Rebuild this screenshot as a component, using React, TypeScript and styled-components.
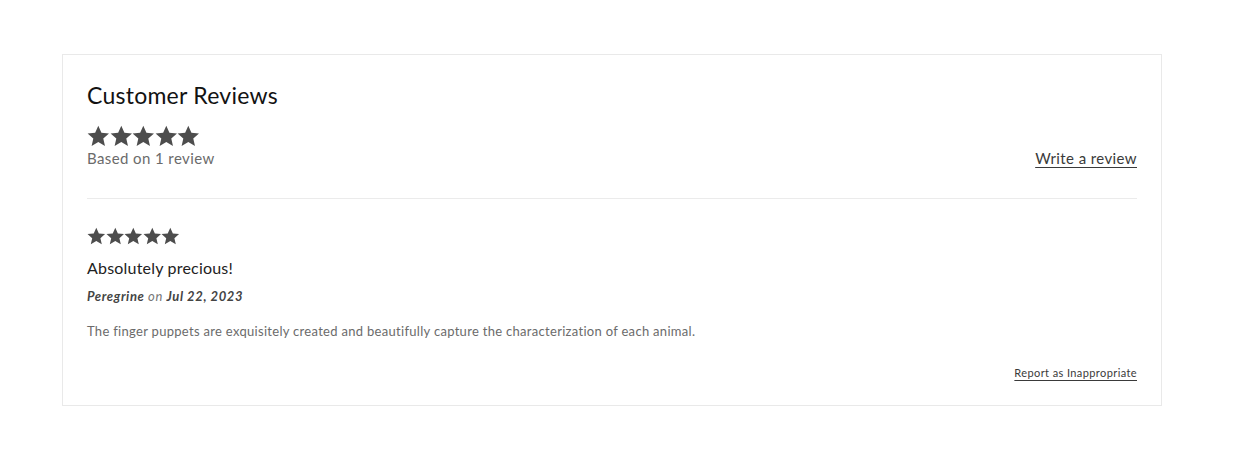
import React from 'react'
import styled, { createGlobalStyle } from 'styled-components'

const GlobalStyle = createGlobalStyle`
	body {
		margin: 0;
		background: #ffffff;
		font-family: 'Lato', 'Noto Sans', sans-serif;
		color: #121212;
	}
`

const Page = styled.div`
	padding: 54px 74px 52px 62px;
`

const Card = styled.section`
	border: 1px solid #e9e9e9;
	padding: 24px 24px 22px 24px;
`

const Title = styled.h2`
	margin: 0;
	font-size: 23px;
	font-weight: 400;
	line-height: 32px;
	color: #121212;
	letter-spacing: 0.25px;
`

const Summary = styled.div`
	display: flex;
	justify-content: space-between;
	align-items: flex-end;
	margin-top: 14px;
	padding-bottom: 30px;
	border-bottom: 1px solid #ebebeb;
`

const SummaryLeft = styled.div`
	display: flex;
	flex-direction: column;
`

const Stars = styled.div<{ $size: number }>`
	display: flex;
	color: #4d4d4d;
	height: ${({ $size }) => $size}px;
	svg {
		width: ${({ $size }) => $size}px;
		height: ${({ $size }) => $size}px;
		display: block;
	}
`

const Muted = styled.span`
	font-size: 15px;
	line-height: 20px;
	color: #6b6b6b;
	letter-spacing: 0.4px;
`

const Link = styled.a<{ $small?: boolean }>`
	color: #3a3a3a;
	text-decoration: underline;
	text-underline-offset: 3px;
	font-size: ${({ $small }) => ($small ? '11px' : '15px')};
	letter-spacing: ${({ $small }) => ($small ? '0.4px' : '0.4px')};
	line-height: 20px;
	cursor: pointer;
`

const Review = styled.article`
	padding-top: 28px;
	display: flex;
	flex-direction: column;
`

const ReviewTitle = styled.h3`
	margin: 12px 0 0;
	font-size: 16px;
	font-weight: 400;
	line-height: 22px;
	color: #222222;
	letter-spacing: 0.2px;
`

const Meta = styled.div`
	margin-top: 8px;
	font-size: 13px;
	font-style: italic;
	line-height: 18px;
	color: #777777;
	letter-spacing: 0.6px;
	b {
		color: #444444;
	}
`

const Body = styled.p`
	margin: 16px 0 0;
	font-size: 13px;
	line-height: 20px;
	color: #6b6b6b;
	letter-spacing: 0.3px;
`

const Footer = styled.div`
	display: flex;
	justify-content: flex-end;
	margin-top: 22px;
`

const Star = () => (
	<svg viewBox='1 1.5 22 21' fill='currentColor'>
		<path d='M12 1.8l3.05 6.75 7.35.72-5.55 4.9 1.650 7.23L12 17.65l-6.5 3.75 1.65-7.23L1.6 9.27l7.35-.72z' />
	</svg>
)

const StarRow = ({ size }: { size: number }) => (
	<Stars $size={size}>
		{[0, 1, 2, 3, 4].map(i => (
			<Star key={i} />
		))}
	</Stars>
)

const App = () => {
	return (
		<>
			<GlobalStyle />
			<Page>
				<Card>
					<Title>Customer Reviews</Title>
					<Summary>
						<SummaryLeft>
							<StarRow size={22.6} />
							<Muted>Based on 1 review</Muted>
						</SummaryLeft>
						<Link>Write a review</Link>
					</Summary>
					<Review>
						<StarRow size={18.6} />
						<ReviewTitle>Absolutely precious!</ReviewTitle>
						<Meta>
							<b>Peregrine</b> on <b>Jul 22, 2023</b>
						</Meta>
						<Body>
							The finger puppets are exquisitely created and beautifully capture the
							characterization of each animal.
						</Body>
						<Footer>
							<Link $small>Report as Inappropriate</Link>
						</Footer>
					</Review>
				</Card>
			</Page>
		</>
	)
}

export default App
